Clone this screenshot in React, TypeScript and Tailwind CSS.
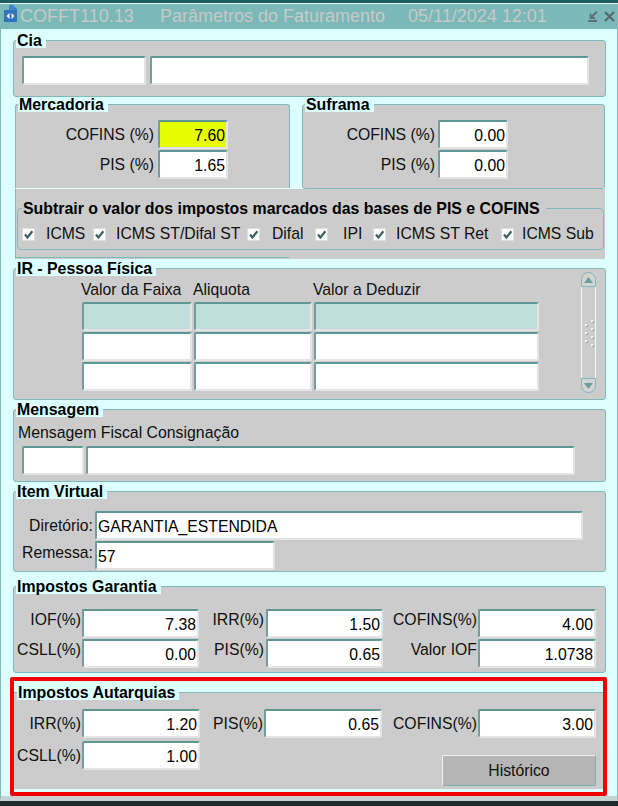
import type { ReactNode } from "react";

const FONT = "font-['Liberation_Sans',Arial,sans-serif]";

function Title({ children, className = "ml-[3px]" }: { children: ReactNode; className?: string }) {
  return (
    <div
      className={`relative z-10 -mb-[8px] h-[15px] w-fit bg-[#dcffff] pl-[1px] pr-[4px] text-[15.9px] font-bold leading-[15px] text-black ${className}`}
    >
      {children}
    </div>
  );
}

function Panel({ children, className = "" }: { children?: ReactNode; className?: string }) {
  return (
    <div className={`rounded-[3px] border border-[#7fb9b9] bg-[#cccccc] ${className}`}>{children}</div>
  );
}

function Input({ value, className = "" }: { value?: string; className?: string }) {
  return (
    <div
      className={`h-[29px] shrink-0 overflow-hidden whitespace-nowrap rounded-[2px] border-2 border-b-[#e4e4e4] border-l-[#6f9f9f] border-r-[#e4e4e4] border-t-[#5f9797] px-[1px] text-[15.75px] leading-[27px] text-black ${className}`}
    >
      {value}
    </div>
  );
}

function Field({
  label,
  value,
  labelW,
  inputW,
  bg = "bg-white",
  labelPad = "pr-[1px]",
}: {
  label: string;
  value: string;
  labelW: string;
  inputW: string;
  bg?: string;
  labelPad?: string;
}) {
  return (
    <div className="flex items-center">
      <div className={`whitespace-nowrap text-right text-[15.75px] leading-[18px] text-[#101010] ${labelPad} ${labelW}`}>
        {label}
      </div>
      <Input value={value} className={`text-right ${inputW} ${bg}`} />
    </div>
  );
}

function Check({ label, width, gap }: { label: string; width: string; gap: string }) {
  return (
    <div className={`flex shrink-0 items-center ${width}`}>
      <svg viewBox="0 0 13 13" className="h-[13px] w-[13px] shrink-0">
        <rect x="0.5" y="0.5" width="12" height="12" fill="#fdfdfd" stroke="#dedede" />
        <path d="M3 6.5 L5.4 9.4 L10.4 3.2" fill="none" stroke="#3c5f60" strokeWidth="2.2" />
      </svg>
      <span className={`whitespace-nowrap text-[15.75px] leading-[18px] text-[#101010] ${gap}`}>{label}</span>
    </div>
  );
}

function Dots({ count, className = "" }: { count: number; className?: string }) {
  return (
    <div className={`flex flex-col gap-[6px] ${className}`}>
      {Array.from({ length: count }, (_, i) => (
        <span key={i} className="h-[2px] w-[2px] bg-[#f2f8f8] shadow-[1px_1px_0_#9aa8a8]" />
      ))}
    </div>
  );
}

function ScrollBar() {
  return (
    <div className="flex h-[121px] w-[15px] flex-col">
      <div className="flex h-[15px] items-center justify-center rounded-t-[8px] border border-[#7fb9b9] bg-[#d4d4d4]">
        <svg viewBox="0 0 9 6" className="h-[6px] w-[9px]">
          <path d="M4.5 0 L9 6 H0 Z" fill="#6e9c9c" />
        </svg>
      </div>
      <div className="flex flex-1 items-center justify-center gap-[4px] border-x border-[#f0f8f8]">
        <Dots count={3} />
        <Dots count={4} />
      </div>
      <div className="flex h-[15px] items-center justify-center rounded-b-[8px] border border-[#7fb9b9] bg-[#d4d4d4]">
        <svg viewBox="0 0 9 6" className="h-[6px] w-[9px]">
          <path d="M4.5 6 L9 0 H0 Z" fill="#6e9c9c" />
        </svg>
      </div>
    </div>
  );
}

function TitleBar() {
  return (
    <div className="flex h-[25px] items-center bg-[#7ab9b8] text-[18px] leading-[25px] text-[#c9c9c9]">
      <svg viewBox="0 0 13 17" className="mb-[7px] ml-[3px] h-[17px] w-[13px] shrink-0">
        <path d="M5 0 H9 L13 4 V6 H5 Z" fill="#3d86c8" />
        <rect x="0" y="5" width="13" height="12" fill="#2f74bc" />
        <path d="M2.5 11 L5.5 8 V14 Z M10.5 11 L7.5 8 V14 Z" fill="#fff" />
      </svg>
      <span className="ml-[3px] w-[140px]">COFFT110.13</span>
      <span className="w-[248px]">Parâmetros do Faturamento</span>
      <span className="w-[180px]">05/11/2024 12:01</span>
      <svg viewBox="0 0 10 11" className="h-[11px] w-[10px] shrink-0">
        <path d="M9 0.5 L3 6.5 M2.5 2.5 V7 H7" fill="none" stroke="#5f6f70" strokeWidth="1.8" />
        <path d="M0 10 H9" stroke="#5f6f70" strokeWidth="2" />
      </svg>
      <svg viewBox="0 0 11 11" className="ml-[6px] h-[11px] w-[11px] shrink-0">
        <path d="M1 1 L10 10 M10 1 L1 10" stroke="#56686a" strokeWidth="2.2" />
      </svg>
    </div>
  );
}

const irRows = [
  { id: "a", bg: "bg-[#bfdedc]" },
  { id: "b", bg: "bg-white" },
  { id: "c", bg: "bg-white" },
];

export default function App() {
  return (
    <div className={`flex h-[806px] w-[618px] flex-col overflow-hidden bg-[#1d2a2b] ${FONT}`}>
      <div className="h-[3px] bg-[#1f5c5e]" />
      <div className="h-px bg-[#e8f4f4]" />
      <div className="flex h-[797px] flex-col border-x border-b-[5px] border-x-[#7fb9b9] border-b-[#c9d2d2] bg-[#dcffff]">
        <TitleBar />

        {/* Cia */}
        <section className="ml-[12px] mr-[11px] mt-[4px]">
          <Title>Cia</Title>
          <Panel className="flex h-[57px] gap-[4px] pl-[8px] pt-[15px]">
            <Input className="w-[124px] bg-white" />
            <Input className="w-[439px] bg-white" />
          </Panel>
        </section>

        {/* Mercadoria + Suframa */}
        <section className="ml-[14px] mr-[12px]">
          <div className="flex items-start">
            <div className="w-[275px]">
              <Title className="ml-[3px]">Mercadoria</Title>
              <div className="h-[84px] rounded-t-[3px] border-x border-t border-[#7fb9b9] bg-[#cccccc] pt-[15px]">
                <div className="flex flex-col gap-[1px]">
                  <Field label="COFINS (%)" value="7.60" labelW="w-[142px]" labelPad="pr-[4px]" inputW="w-[70px]" bg="bg-[#e6ff00]" />
                  <Field label="PIS (%)" value="1.65" labelW="w-[142px]" labelPad="pr-[4px]" inputW="w-[70px]" />
                </div>
              </div>
            </div>
            <div className="ml-[12px] flex-1">
              <Title className="ml-[3px]">Suframa</Title>
              <Panel className="h-[85px] pt-[15px]">
                <div className="flex flex-col gap-[1px]">
                  <Field label="COFINS (%)" value="0.00" labelW="w-[135px]" labelPad="pr-[3px]" inputW="w-[70px]" />
                  <Field label="PIS (%)" value="0.00" labelW="w-[135px]" labelPad="pr-[3px]" inputW="w-[70px]" />
                </div>
              </Panel>
            </div>
          </div>
          <div className="h-[70px] border-l border-[#7fb9b9] bg-[#cccccc] pl-[1px] pr-[1px] pt-[12px]">
            <div className="relative z-10 -mb-[8px] ml-[5px] h-[15px] w-fit bg-[#cccccc] pl-[1px] pr-[6px] text-[15.9px] font-bold leading-[15px] text-black">
              Subtrair o valor dos impostos marcados das bases de PIS e COFINS
            </div>
            <div className="flex h-[42px] items-center rounded-[4px] border border-[#7fb9b9] pl-[4px] pt-[10px]">
              <Check label="ICMS" width="w-[71px]" gap="ml-[11px]" />
              <Check label="ICMS ST/Difal ST" width="w-[154px]" gap="ml-[10px]" />
              <Check label="Difal" width="w-[68px]" gap="ml-[12px]" />
              <Check label="IPI" width="w-[58px]" gap="ml-[15px]" />
              <Check label="ICMS ST Ret" width="w-[128px]" gap="ml-[10px]" />
              <Check label="ICMS Sub" width="w-[100px]" gap="ml-[8px]" />
            </div>
            <div className="ml-[-1px] mt-[7px] h-px w-[273px] bg-[#7fb9b9]" />
          </div>
        </section>

        {/* IR */}
        <section className="ml-[12px] mr-[11px] mt-[2px]">
          <Title>IR - Pessoa Física</Title>
          <Panel className="flex h-[132px]">
            <div className="ml-[68px] mt-[12px] w-[460px]">
              <div className="-ml-[1px] flex h-[21px] text-[15.75px] leading-[18px] text-[#101010]">
                <span className="w-[112px]">Valor da Faixa</span>
                <span className="w-[120px]">Aliquota</span>
                <span>Valor a Deduzir</span>
              </div>
              <div className="flex flex-col gap-px">
                {irRows.map((row) => (
                  <div key={row.id} className="flex gap-[2px]">
                    <Input className={`w-[110px] ${row.bg}`} />
                    <Input className={`w-[118px] ${row.bg}`} />
                    <Input className={`w-[225px] ${row.bg}`} />
                  </div>
                ))}
              </div>
            </div>
            <div className="ml-[39px] mt-[3px]">
              <ScrollBar />
            </div>
          </Panel>
        </section>

        {/* Mensagem */}
        <section className="ml-[12px] mr-[11px] mt-[2px]">
          <Title>Mensagem</Title>
          <Panel className="h-[73px] pl-[8px] pt-[14px]">
            <div className="-ml-[4px] h-[22px] text-[15.85px] leading-[18px] text-[#101010]">
              Mensagem Fiscal Consignação
            </div>
            <div className="flex gap-[2px]">
              <Input className="w-[62px] bg-white" />
              <Input className="w-[489px] bg-white" />
            </div>
          </Panel>
        </section>

        {/* Item Virtual */}
        <section className="ml-[12px] mr-[11px] mt-[2px]">
          <Title>Item Virtual</Title>
          <Panel className="flex h-[81px] flex-col gap-px pt-[19px]">
            <div className="flex items-center">
              <div className="w-[81px] pr-[2px] text-right text-[15.75px] leading-[18px] text-[#101010]">Diretório:</div>
              <Input value="GARANTIA_ESTENDIDA" className="w-[488px] bg-white" />
            </div>
            <div className="flex items-center">
              <div className="mb-[6px] w-[81px] pr-[2px] text-right text-[15.75px] leading-[18px] text-[#101010]">Remessa:</div>
              <Input value="57" className="w-[180px] bg-white" />
            </div>
          </Panel>
        </section>

        {/* Impostos Garantia: the labels sit a little above the field centre */}
        <section className="ml-[12px] mr-[11px] mt-[7px]">
          <Title>Impostos Garantia</Title>
          <Panel className="h-[87px] pt-[22px]">
            <div className="grid grid-cols-[185px_184px_auto] gap-y-px">
              <Field label="IOF(%)" value="7.38" labelW="w-[68px]" labelPad="mb-[7px] pr-[1px]" inputW="w-[117px]" />
              <Field label="IRR(%)" value="1.50" labelW="w-[67px]" labelPad="mb-[7px] pr-[2px]" inputW="w-[117px]" />
              <Field label="COFINS(%)" value="4.00" labelW="w-[95px]" labelPad="mb-[7px] pr-[1px]" inputW="w-[118px]" />
              <Field label="CSLL(%)" value="0.00" labelW="w-[68px]" labelPad="mb-[7px] pr-[1px]" inputW="w-[117px]" />
              <Field label="PIS(%)" value="0.65" labelW="w-[67px]" labelPad="mb-[7px] pr-[2px]" inputW="w-[117px]" />
              <Field label="Valor IOF" value="1.0738" labelW="w-[95px]" labelPad="mb-[7px] pr-[1px]" inputW="w-[118px]" />
            </div>
          </Panel>
        </section>

        {/* Impostos Autarquias */}
        <section className="ml-[9px] mr-[10px] mt-[4px] h-[122px] rounded-[2px] border-[4px] border-[#f40000]">
          <div className="pt-[4px]">
            <Title>Impostos Autarquias</Title>
            <div className="h-[97px] border-t border-[#7fb9b9] bg-[#cccccc] pt-[16px]">
              <div className="grid grid-cols-[186px_182px_auto]">
                <Field label="IRR(%)" value="1.20" labelW="w-[68px]" inputW="w-[118px]" />
                <Field label="PIS(%)" value="0.65" labelW="w-[64px]" inputW="w-[118px]" />
                <Field label="COFINS(%)" value="3.00" labelW="w-[96px]" inputW="w-[118px]" />
              </div>
              <div className="mt-[3px] flex items-start">
                <Field label="CSLL(%)" value="1.00" labelW="w-[68px]" inputW="w-[118px]" />
                <button
                  type="button"
                  className="ml-[242px] mt-[14px] h-[31px] w-[154px] rounded-[2px] border border-b-[#7fb0b0] border-l-[#f0f0f0] border-r-[#7fb0b0] border-t-[#f0f0f0] bg-[#b5b5b5] text-[15.75px] leading-[29px] text-[#101010]"
                >
                  Histórico
                </button>
              </div>
            </div>
          </div>
        </section>
      </div>
    </div>
  );
}
